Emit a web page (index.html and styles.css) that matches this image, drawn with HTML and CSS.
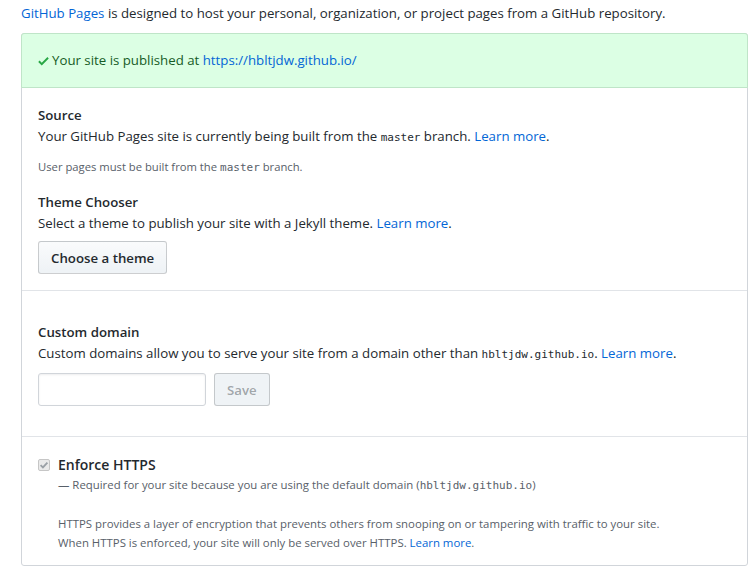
FILE: index.html
```html
<!DOCTYPE html>
<html lang="en">
<head>
<meta charset="utf-8">
<title>GitHub Pages</title>
<link rel="stylesheet" href="styles.css">
</head>
<body>
<div class="page">
  <p class="intro"><a href="#">GitHub Pages</a> is designed to host your personal, organization, or project pages from a GitHub repository.</p>
  <div class="box">
    <div class="flash">
      <svg class="check" viewBox="0 0 12 16" width="11" height="14" aria-hidden="true"><path fill="currentColor" fill-rule="evenodd" d="M12 5l-8 8-4-4 1.5-1.5L4 10l6.5-6.5L12 5z"/></svg>
      <span>Your site is published at <a href="#">https://hbltjdw.github.io/</a></span>
    </div>
    <div class="section">
      <h3 class="title">Source</h3>
      <p class="desc">Your GitHub Pages site is currently being built from the <code>master</code> branch. <a href="#">Learn more</a>.</p>
      <p class="note">User pages must be built from the <code>master</code> branch.</p>
      <h3 class="title title-gap">Theme Chooser</h3>
      <p class="desc">Select a theme to publish your site with a Jekyll theme. <a href="#">Learn more</a>.</p>
      <button class="btn" type="button">Choose a theme</button>
    </div>
    <div class="section section-domain">
      <h3 class="title">Custom domain</h3>
      <p class="desc">Custom domains allow you to serve your site from a domain other than <code>hbltjdw.github.io</code>. <a href="#">Learn more</a>.</p>
      <form class="domain-form">
        <input class="input" type="text" aria-label="Custom domain">
        <button class="btn btn-disabled" type="button" disabled>Save</button>
      </form>
    </div>
    <div class="section section-https">
      <div class="check-row">
        <span class="checkbox" aria-hidden="true"><svg viewBox="0 0 12 12" width="12" height="12"><path d="M2.6 6.2 L4.9 8.4 L9.4 3.6" fill="none" stroke="#9aa0a6" stroke-width="1.8"/></svg></span>
        <div class="check-body">
          <div class="check-label">Enforce HTTPS</div>
          <p class="check-note">— Required for your site because you are using the default domain (<code>hbltjdw.github.io</code>)</p>
          <p class="check-help">HTTPS provides a layer of encryption that prevents others from snooping on or tampering with traffic to your site.<br>When HTTPS is enforced, your site will only be served over HTTPS. <a href="#">Learn more</a>.</p>
        </div>
      </div>
    </div>
  </div>
</div>
</body>
</html>
```
FILE: styles.css
```css
* { box-sizing: border-box; }
body {
  margin: 0;
  background: #fff;
  color: #24292e;
  font-family: "Open Sans", "Noto Sans", "Liberation Sans", sans-serif;
  font-size: 13.25px;
  line-height: 21px;
}
a { color: #0366d6; text-decoration: none; }
p, h3 { margin: 0; }
code {
  font-family: "DejaVu Sans Mono", "Liberation Mono", monospace;
  font-size: 11px;
  line-height: 1;
}
.page {
  width: 727px;
  margin-left: 21px;
}
.intro {
  padding-top: 3px;
  height: 33px;
}
.box {
  border: 1px solid #d1d5da;
  border-radius: 3px;
}
.flash {
  background: #dcffe4;
  color: #165c26;
  padding: 16px;
  height: 55px;
  display: flex;
  align-items: center;
  gap: 3px;
  border-radius: 3px 3px 0 0;
  margin: -1px -1px 0 -1px;
  border: 1px solid #bfe5c8;
}
.check { color: #28a745; margin-top: 1px; }
.section {
  padding: 17px 16px 16px;
  border-bottom: 1px solid #e1e4e8;
}
.section:last-child { border-bottom: 0; }
.title {
  font-size: 13.25px;
  font-weight: 600;
  line-height: 21px;
}
.note {
  font-size: 11.25px;
  color: #586069;
  margin-top: 11px;
  line-height: 18px;
}
.note code { font-size: 11px; }
.title-gap { margin-top: 16px; }
.btn {
  margin-top: 7px;
  height: 33px;
  padding: 0 12px;
  font-family: inherit;
  font-size: 13.25px;
  font-weight: 600;
  color: #24292e;
  background: linear-gradient(#fafbfc, #eff3f6 90%);
  border: 1px solid rgba(27,31,35,0.2);
  border-radius: 3px;
}
.section-domain { padding-top: 31px; padding-bottom: 30px; }
.domain-form {
  display: flex;
  gap: 8px;
  margin-top: 9px;
}
.domain-form .btn { margin-top: 0; }
.input {
  width: 168px;
  height: 33px;
  border: 1px solid #d1d5da;
  border-radius: 3px;
  box-shadow: inset 0 1px 2px rgba(27,31,35,0.075);
}
.btn-disabled {
  color: rgba(36,41,46,0.4);
  background: #eff3f6;
  border-color: rgba(27,31,35,0.2);
  padding: 0 12px;
  height: 33px;
}
.section-https { padding-top: 17px; padding-bottom: 13px; }
.check-row { display: flex; gap: 8px; }
.checkbox {
  width: 12px;
  height: 12px;
  margin-top: 5px;
  border: 1px solid #c6c6c6;
  border-radius: 2px;
  background: #eaeaea;
  display: flex;
}
.checkbox svg { margin: -1px; }
.check-label { font-weight: 600; font-size: 14px; line-height: 21px; }
.check-note { font-size: 11.4px; color: #586069; line-height: 19px; }
.check-note code { font-size: 11px; }
.check-help {
  font-size: 11.4px;
  color: #586069;
  line-height: 19px;
  margin-top: 20px;
}
```
